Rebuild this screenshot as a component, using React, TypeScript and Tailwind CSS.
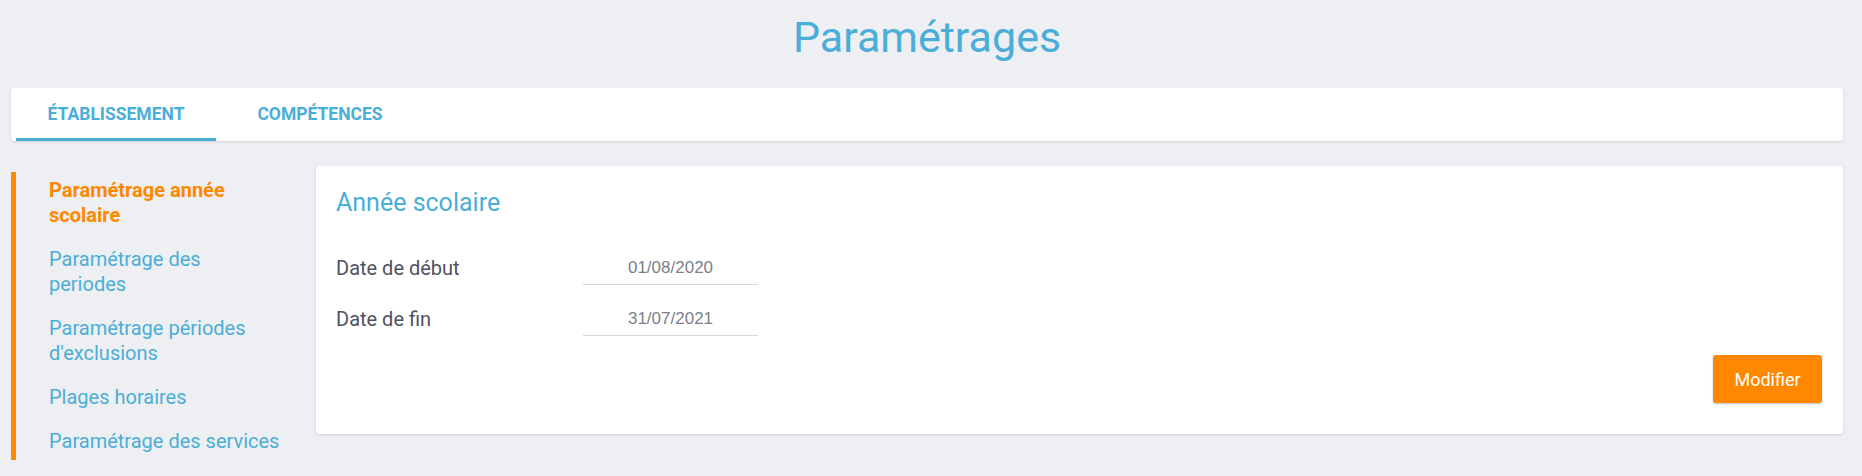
export default function App() {
  const menu = [
    { label: "Paramétrage année scolaire", active: true },
    { label: "Paramétrage des periodes", active: false },
    { label: "Paramétrage périodes d'exclusions", active: false },
    { label: "Plages horaires", active: false },
    { label: "Paramétrage des services", active: false },
  ];

  const dates = [
    { label: "Date de début", value: "01/08/2020" },
    { label: "Date de fin", value: "31/07/2021" },
  ];

  return (
    <div className="min-h-[476px] bg-[#eeeff2] pl-[11px] pr-[19px] pt-[11px] pb-[20px] font-['Roboto',sans-serif]">
      <h1 className="text-center text-[43px] leading-[52px] text-[#4aaed8]">Paramétrages</h1>

      <div className="mt-[25px] flex h-[53px] rounded-[4px] bg-white pl-[5px] shadow-[0_1px_3px_rgba(0,0,0,0.12)]">
        <div className="flex w-[200px] items-center justify-center border-b-[3px] border-[#4aaed8] pt-[3px] text-[17.5px] font-bold text-[#4aaed8]">
          ÉTABLISSEMENT
        </div>
        <div className="ml-[4px] flex w-[200px] items-center justify-center text-[17.5px] font-bold text-[#4aaed8]">
          COMPÉTENCES
        </div>
      </div>

      <div className="mt-[25px] flex items-start">
        <div className="mt-[6px] w-[305px] shrink-0">
          <ul className="flex flex-col gap-[19px] border-l-[5px] border-[#ff8800] py-[6px] pl-[33px] pr-[36px]">
            {menu.map((item, index) => (
              <li
                key={index}
                className={
                  item.active
                    ? "text-[20px] leading-[25px] font-bold text-[#ff8800]"
                    : "text-[20px] leading-[25px] text-[#4aaed8]"
                }
              >
                {item.label}
              </li>
            ))}
          </ul>
        </div>

        <div className="flex-1 rounded-[4px] bg-white px-[20px] pt-[22px] pb-[31px] shadow-[0_1px_3px_rgba(0,0,0,0.12)]">
          <h2 className="text-[25px] leading-[30px] text-[#4aaed8]">Année scolaire</h2>

          <div className="mt-[33px] flex flex-col gap-[17px]">
            {dates.map((row, index) => (
              <div key={index} className="flex h-[34px] items-center">
                <span className="w-[247px] text-[20px] text-[#50525f]">{row.label}</span>
                <div className="flex h-[34px] w-[175px] items-center justify-center border-b border-[#d6d6dd] pt-[1px] font-['Liberation_Sans',Arial,sans-serif] text-[17px] text-[#7c7f8a]">
                  {row.value}
                </div>
              </div>
            ))}
          </div>

          <div className="mt-[19px] flex justify-end pr-[1px]">
            <button className="h-[48px] w-[109px] rounded-[3px] bg-[#ff8800] text-[18px] text-white shadow-[0_1px_2px_rgba(0,0,0,0.25)]">
              Modifier
            </button>
          </div>
        </div>
      </div>
    </div>
  );
}
